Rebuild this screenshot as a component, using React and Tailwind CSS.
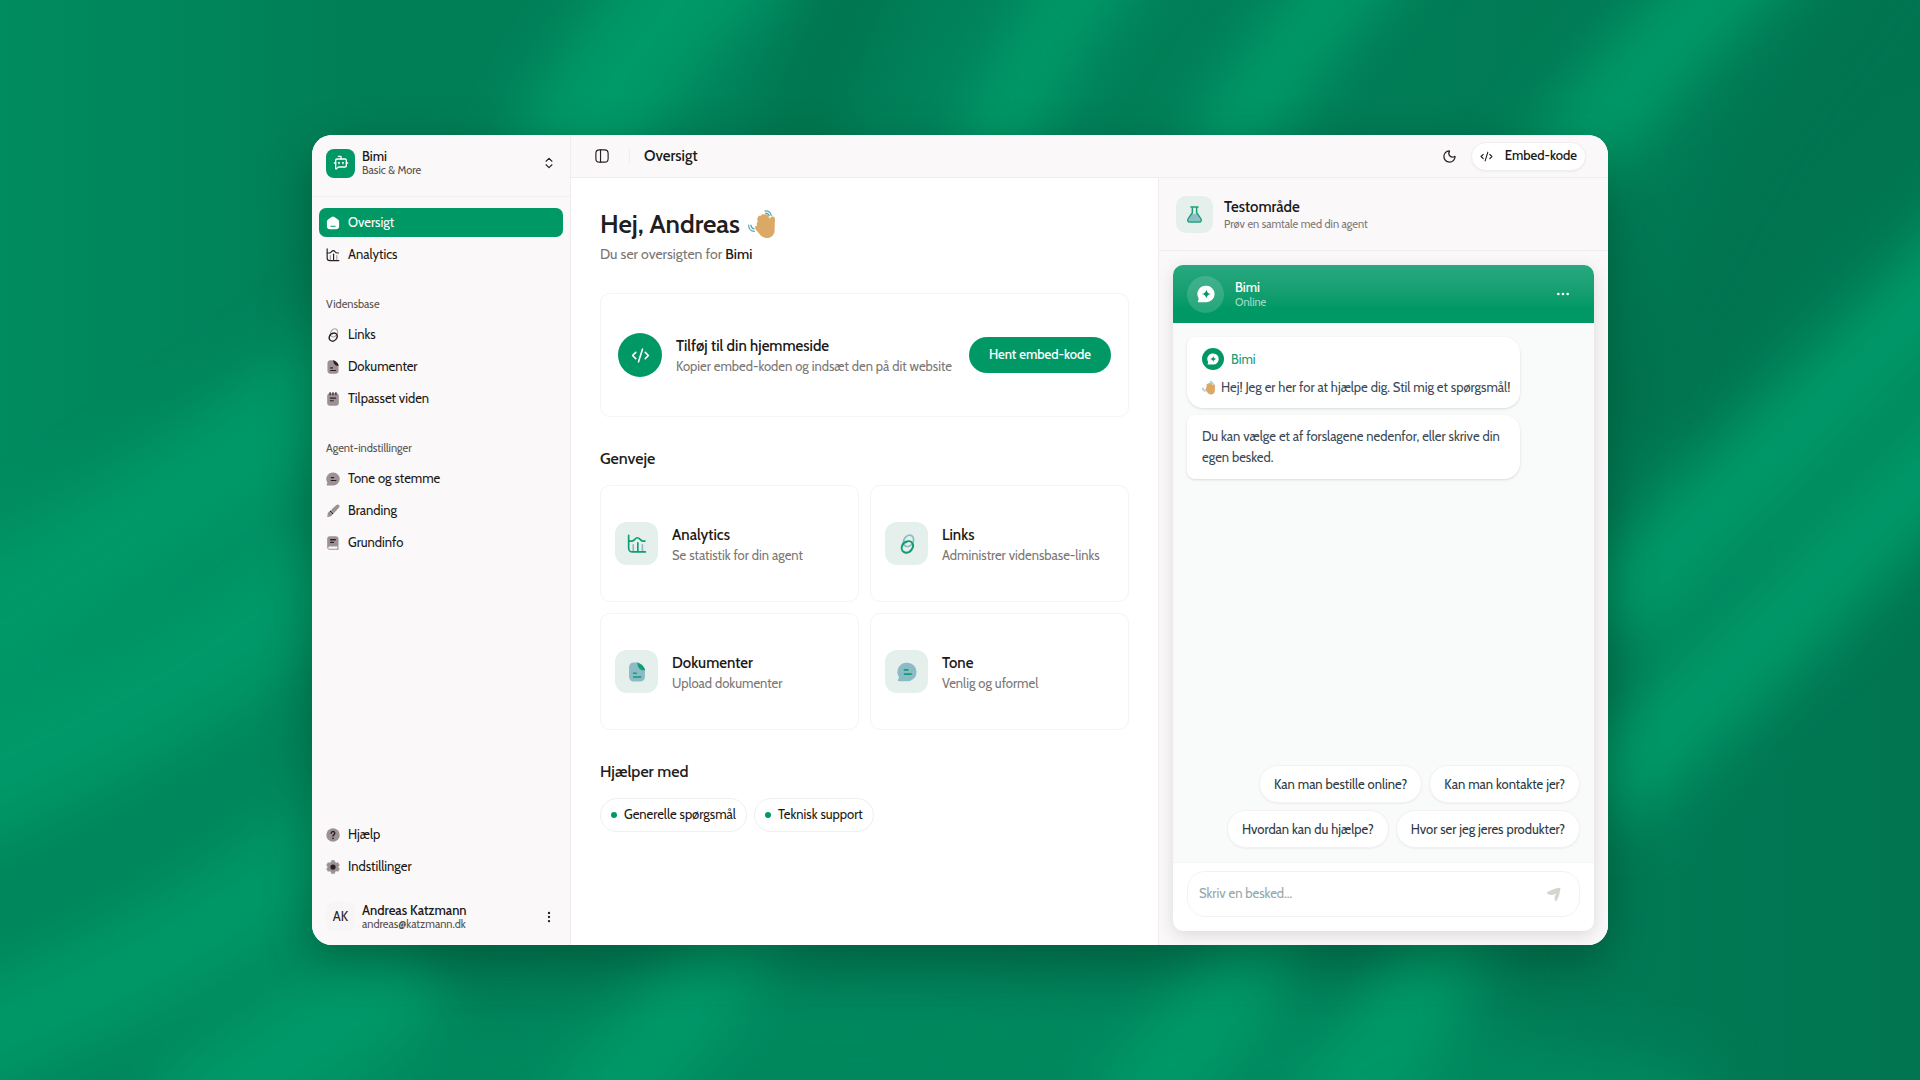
import React, { useState } from 'react'
import {
  BotMessageSquare,
  ChevronsUpDown,
  CodeXml,
  Ellipsis,
  EllipsisVertical,
  Moon,
} from 'lucide-react'

// ---------------------------------------------------------------------------
// Icons: two-tone set, the soft layer is a muted fill under currentColor lines
// ---------------------------------------------------------------------------
function Svg({ size = 14, className = '', children }) {
  return (
    <svg
      width={size}
      height={size}
      viewBox="0 0 24 24"
      fill="none"
      className={`shrink-0 ${className}`}
      aria-hidden="true"
    >
      {children}
    </svg>
  )
}

const line = {
  stroke: 'currentColor',
  strokeWidth: 2,
  strokeLinecap: 'round',
  strokeLinejoin: 'round',
}

function HomeIcon(props) {
  return (
    <Svg {...props}>
      <path
        d="M9.6 1.6 3.5 5.8A5 5 0 0 0 1.5 9.8V17a5.5 5.5 0 0 0 5.5 5.5h10a5.5 5.5 0 0 0 5.5-5.5V9.8a5 5 0 0 0-2-4l-6.100-4.200a4.200 4.200 0 0 0-4.800 0Z"
        fill="currentColor"
      />
      <path d="M8.5 17.5h7" stroke="#009966" strokeWidth="2" strokeLinecap="round" />
    </Svg>
  )
}

function ChartIcon({ soft = '#a8a0a0', ...props }) {
  return (
    <Svg {...props}>
      <path d="M7.5 13v7M18.5 13v7" {...line} stroke={soft} />
      <path d="M2 1.5V17a4.500 4.500 0 0 0 4.500 4.500H22" {...line} />
      <path d="M13 10.5V21" {...line} />
      <path d="M2 8.5h4c3 0 3.500-4 6.500-4S16 8.500 19 8.500h2.500" {...line} />
    </Svg>
  )
}

function LinkIcon({ soft = '#a8a0a0', ...props }) {
  return (
    <Svg {...props}>
      <ellipse cx="13.800" cy="8.300" rx="5.600" ry="7.300" transform="rotate(32 13.800 8.300)" {...line} stroke={soft} />
      <path
        d="M10.500 9.800c2.700-1.700 6.200-1.300 7.800 1 1.700 2.500 1 6-1.300 8.700-2.400 2.800-6.300 3.800-9 2-2.900-2-3-6-1-9.200"
        {...line}
        strokeWidth="2.400"
      />
      <path d="M7 12.300c1.200-2 2.300-2.600 4-3" {...line} strokeWidth="2.400" />
    </Svg>
  )
}

function DocIcon({ soft = '#9c9294', ...props }) {
  return (
    <Svg {...props}>
      <path d="M8 .5h5.500L21.500 9v9a5.500 5.500 0 0 1-5.500 5.500H8A5.500 5.500 0 0 1 2.500 18V6A5.500 5.500 0 0 1 8 .5Z" fill={soft} />
      <path d="M12.500.5c5 1.500 8 4.500 9.500 9.500-6 .5-9.500-3-9.500-9.500Z" fill="currentColor" />
      <path d="M8 13.500h3M8 18h8.500" {...line} />
    </Svg>
  )
}

function NoteIcon(props) {
  return (
    <Svg {...props}>
      <rect x="2" y="2" width="20" height="21.500" rx="5" fill="#9c9294" />
      <path d="M7 1v3.500M12 1v3.500M17 1v3.500M7.500 10.500h9M7.500 15h5" {...line} />
    </Svg>
  )
}

function ChatIcon({ soft = '#9c9294', ...props }) {
  return (
    <Svg {...props}>
      <path
        d="M12.500 1a11 11 0 1 1 0 22H2a1 1 0 0 1-.8-1.600c1-1.300 1.300-2.400.8-3.900A11 11 0 0 1 12.500 1Z"
        fill={soft}
      />
      <path d="M9 9.500h4M9 14.500h8" {...line} />
    </Svg>
  )
}

function BrushIcon(props) {
  return (
    <Svg {...props}>
      <path d="M22.200 1.800c1.400 1.400 1.200 3-.1 4.500l-8.600 9.400-5.200-5.200 9.400-8.600c1.500-1.300 3.100-1.500 4.500-.1Z" fill="#9c9294" />
      <path d="m7.800 11 5.200 5.200-2 1.800L6 13l1.800-2Z" fill="currentColor" />
      <path d="M5.500 13.500c3.500 0 5.200 2 5 4.500-.3 3-3.500 4.500-9 4.300 1.800-2 1-3.300 1.300-5.300.3-1.900 1.200-3.200 2.700-3.500Z" fill="#9c9294" />
    </Svg>
  )
}

function BookIcon(props) {
  return (
    <Svg {...props}>
      <path d="M6.500.5h10A5 5 0 0 1 21.500 5.500V18H6a2 2 0 0 0 0 4h15.500v1.500H6.500A4.500 4.500 0 0 1 2 19V5A4.500 4.500 0 0 1 6.500.5Z" fill="#9c9294" />
      <path d="M20.300 18v4.500" stroke="#9c9294" strokeWidth="2" />
      <path d="M8 6.500h8M8 11h4.500" {...line} strokeWidth="2.400" />
    </Svg>
  )
}

function HelpIcon(props) {
  return (
    <Svg {...props}>
      <circle cx="12" cy="12" r="11.500" fill="#9c9294" />
      <path d="M9 9a3 3 0 1 1 4.700 2.400c-1 .7-1.700 1.200-1.700 2.300" {...line} strokeWidth="2.400" />
      <circle cx="12" cy="17.600" r="1.500" fill="currentColor" />
    </Svg>
  )
}

function GearIcon(props) {
  return (
    <Svg {...props}>
      <path
        d="M9.500 1h5l1 3.200 2 1.100 3.200-.7L23 8.900 21 11.200v1.600l2 2.300-2.300 4.300-3.200-.7-2 1.100-1 3.200h-5l-1-3.200-2-1.100-3.200.7L1 15.100l2-2.300v-1.600L1 8.900l2.300-4.300 3.200.7 2-1.100L9.500 1Z"
        fill="#9c9294"
        stroke="#9c9294"
        strokeLinejoin="round"
      />
      <circle cx="12" cy="12" r="4.500" fill="currentColor" />
    </Svg>
  )
}

function FlaskIcon(props) {
  return (
    <Svg {...props}>
      <path d="M9 11h6l5 8.500c.6 1.400-.2 2-1.500 2h-13c-1.300 0-2.100-.6-1.500-2L9 11Z" fill="#8fbfc4" />
      <path d="M7 1.500h10M9 1.500v8L3 18.200c-1.200 2.300 0 4.300 2.200 4.300h13.600c2.200 0 3.400-2 2.200-4.300L15 9.500v-8" {...line} strokeWidth="2.200" />
    </Svg>
  )
}

function SparkChatIcon({ spark, ...props }) {
  return (
    <Svg {...props}>
      <path
        d="M12.500 1a11 11 0 1 1 0 22H2a1 1 0 0 1-.8-1.600c1-1.300 1.200-2.500.7-4.200A11 11 0 0 1 12.500 1Z"
        fill="currentColor"
      />
      <path d="M12.500 6c.9 4 2 5.100 6 6-4 .9-5.100 2-6 6-.9-4-2-5.100-6-6 4-.9 5.100-2 6-6Z" fill={spark} />
    </Svg>
  )
}

function SendIcon(props) {
  return (
    <Svg {...props}>
      <path
        d="M21.800 1.300c1-.2 1.300.5 1.200 1.400-.5 5.500-2.800 13.500-5.300 18.600-1 1.900-2.600 2-3.300 0-1-2.800-1-6 .6-8.500l1.800-3-3 1.600C11.200 13 8 13 4.500 12 1.500 11 .5 9.300 2.500 8 8 4.500 15.500 2 21.800 1.300Z"
        fill="currentColor"
      />
    </Svg>
  )
}

function PanelIcon(props) {
  return (
    <Svg {...props}>
      <rect x="1.500" y="1.500" width="21" height="21" rx="6" {...line} />
      <path d="M9.500 1.500v21" {...line} />
    </Svg>
  )
}

function WaveHand({ size }) {
  return (
    <svg width={size} height={size} viewBox="0 0 28 28" fill="none" className="shrink-0" aria-hidden="true">
      <path
        d="M9.400 7.600c.3-2 2-2.300 3-1.800.4-1.700 2.400-2.300 3.600-1.400 1.300-.7 2.800 0 3.300 1l1.900 3.300c.3-1.500 1.500-2.700 3-2.400 1.400.3 1.900 1.400 1.800 2.700L25.700 20c-.3 4.500-3.500 7-7.500 7-3.400 0-5.700-1.800-7.300-4l-3.600-4.500c-1.300-2 .2-3.700 1.600-3.500-.9-1.600-.5-3 .7-3.600-.9-1.300-.9-2.800-.2-3.800Z"
        fill="#dba965"
      />
      <path
        d="M16.500.9c3-.2 5.300 1.500 6 4.500M17 3c1.900.1 3 1 3.500 2.600M.6 14.500c0 3.500 2.300 6 5.500 6.200M2.800 14.500c.2 2.200 1.400 3.500 3 3.800"
        stroke="#5ba7b8"
        strokeWidth="1.200"
        strokeLinecap="round"
      />
    </svg>
  )
}

// ---------------------------------------------------------------------------
// Backdrop: soft diagonal folds of green
// ---------------------------------------------------------------------------
function Backdrop() {
  return (
    <svg
      className="absolute inset-0 w-full h-full"
      viewBox="0 0 1920 1080"
      preserveAspectRatio="xMidYMid slice"
      aria-hidden="true"
    >
      <defs>
        <filter id="soft" x="-400" y="-400" width="2800" height="1900" filterUnits="userSpaceOnUse">
          <feGaussianBlur stdDeviation="28" />
        </filter>
        <linearGradient id="base" x1="0" y1="0" x2="1" y2="0">
          <stop offset="0" stopColor="#008c5f" />
          <stop offset="0.2" stopColor="#007e56" />
          <stop offset="0.45" stopColor="#00825a" />
          <stop offset="0.85" stopColor="#007a54" />
          <stop offset="1" stopColor="#007550" />
        </linearGradient>
      </defs>
      <rect width="1920" height="1080" fill="url(#base)" />
      <g filter="url(#soft)" fill="none">
        <path d="M-80 760 Q160 640 360 460 L360 1160 L-80 1160 Z" fill="#00875c" />
        <path d="M300 1120 Q800 980 1700 1120" stroke="#00885d" strokeWidth="110" />
        <path d="M880 -80 L780 180" stroke="#007650" strokeWidth="90" />
        <path d="M1960 -60 L1800 160 L1640 440" stroke="#007450" strokeWidth="120" />
        <g stroke="#009968">
          <path d="M760 -80 Q640 20 560 180" strokeWidth="125" />
          <path d="M1140 -80 Q1040 20 980 180" strokeWidth="80" />
          <path d="M1400 -80 Q1270 60 1210 180" strokeWidth="80" />
          <path d="M1790 -80 Q1640 60 1540 200" strokeWidth="90" />
          <path d="M2020 200 Q1780 460 1600 620" strokeWidth="95" />
          <path d="M2020 370 Q1780 630 1590 800" strokeWidth="95" />
          <path d="M460 290 Q200 500 -80 660" strokeWidth="120" />
          <path d="M330 560 Q180 690 -80 800" strokeWidth="120" />
          <path d="M380 800 Q200 960 -80 1060" strokeWidth="90" />
          <path d="M420 960 Q300 1050 180 1130" strokeWidth="110" />
          <path d="M770 880 Q700 1000 580 1130" strokeWidth="90" />
          <path d="M1280 900 Q1230 1000 1120 1130" strokeWidth="90" />
          <path d="M1460 900 Q1420 1010 1320 1130" strokeWidth="95" />
        </g>
      </g>
    </svg>
  )
}

// ---------------------------------------------------------------------------
// Sidebar
// ---------------------------------------------------------------------------
const NAV_GROUPS = [
  {
    items: [
      { name: 'Oversigt', icon: HomeIcon },
      { name: 'Analytics', icon: ChartIcon },
    ],
  },
  {
    label: 'Vidensbase',
    items: [
      { name: 'Links', icon: LinkIcon },
      { name: 'Dokumenter', icon: DocIcon },
      { name: 'Tilpasset viden', icon: NoteIcon },
    ],
  },
  {
    label: 'Agent-indstillinger',
    items: [
      { name: 'Tone og stemme', icon: ChatIcon },
      { name: 'Branding', icon: BrushIcon },
      { name: 'Grundinfo', icon: BookIcon },
    ],
  },
]

const FOOTER_ITEMS = [
  { name: 'Hjælp', icon: HelpIcon },
  { name: 'Indstillinger', icon: GearIcon },
]

function NavItem({ name, icon: Icon, active }) {
  return (
    <a
      href="#"
      aria-current={active ? 'page' : undefined}
      className={`flex items-center gap-2 h-[29px] px-[7px] rounded-[7px] text-[13px] ${
        active ? 'bg-[#009966] text-white' : 'text-[#1c1917]'
      }`}
    >
      <Icon size={14} className={active ? 'text-white' : 'text-[#2b2020]'} />
      {name}
    </a>
  )
}

function Sidebar() {
  return (
    <aside className="flex flex-col w-[259px] shrink-0 border-r border-[#efedee] bg-[#faf8f9]">
      <button type="button" className="flex items-center gap-[7px] h-[62px] px-[14px] pb-[5px] border-b border-[#efedee] text-left">
        <span className="flex items-center justify-center size-[29px] rounded-lg bg-[#009966] text-white">
          <BotMessageSquare size={16} />
        </span>
        <span className="flex-1 leading-[14px]">
          <span className="block text-[13px] font-medium text-[#1c1917]">Bimi</span>
          <span className="block text-[11px] text-[#57504d]">Basic &amp; More</span>
        </span>
        <ChevronsUpDown size={14} className="text-[#2b2020]" />
      </button>

      <nav className="flex flex-col flex-1 px-[7px] pt-[11px]">
        {NAV_GROUPS.map((group, i) => (
          <div key={i} className="mb-5">
            {group.label && (
              <div className="flex items-center h-[31px] px-[7px] text-[11px] text-[#57534e]">
                {group.label}
              </div>
            )}
            <div className="space-y-[3px]">
              {group.items.map((item) => (
                <NavItem key={item.name} {...item} active={item.name === 'Oversigt'} />
              ))}
            </div>
          </div>
        ))}
        <div className="mt-auto space-y-[3px]">
          {FOOTER_ITEMS.map((item) => (
            <NavItem key={item.name} {...item} />
          ))}
        </div>
      </nav>

      <button type="button" className="flex items-center gap-[7px] h-[64px] px-[14px] pt-[7px] text-left">
        <span className="flex items-center justify-center size-[29px] rounded-lg bg-[#f7f5f5] text-[13px] text-[#292524]">
          AK
        </span>
        <span className="flex-1 leading-[14px]">
          <span className="block text-[13px] font-medium text-[#1c1917]">Andreas Katzmann</span>
          <span className="block text-[11px] text-[#57504d]">andreas@katzmann.dk</span>
        </span>
        <EllipsisVertical size={14} className="text-[#2b2020]" />
      </button>
    </aside>
  )
}

// ---------------------------------------------------------------------------
// Overview
// ---------------------------------------------------------------------------
const SHORTCUTS = [
  { title: 'Analytics', text: 'Se statistik for din agent', icon: ChartIcon },
  { title: 'Links', text: 'Administrer vidensbase-links', icon: LinkIcon },
  { title: 'Dokumenter', text: 'Upload dokumenter', icon: DocIcon },
  { title: 'Tone', text: 'Venlig og uformel', icon: ChatIcon },
]

const TOPICS = ['Generelle spørgsmål', 'Teknisk support']

function TopBar() {
  return (
    <header className="flex items-center h-[43px] pl-6 pr-[22px] border-b border-[#efedee] bg-[#faf8f9]">
      <button type="button" aria-label="Skjul sidepanel" className="text-[#2b2020]">
        <PanelIcon size={14} />
      </button>
      <span className="w-px h-[14px] ml-5 mr-[14px] bg-[#efedee]" />
      <span className="text-[15px] font-medium text-[#1c1917]">Oversigt</span>
      <div className="flex items-center gap-[14px] ml-auto">
        <button type="button" aria-label="Skift tema" className="text-[#2b2020]">
          <Moon size={15} />
        </button>
        <button
          type="button"
          className="flex items-center gap-3 h-[29px] px-2 rounded-full border border-[#efedee] bg-white text-[13px] font-medium text-[#1c1917] shadow-xs"
        >
          <CodeXml size={13} />
          Embed-kode
        </button>
      </div>
    </header>
  )
}

function Overview() {
  return (
    <main className="flex-1 min-w-0 px-[29px] pt-[30px] bg-white">
      <h1 className="flex items-center gap-2 text-[26px] leading-8 font-semibold text-[#211d20]">
        Hej, Andreas <WaveHand size={29} />
      </h1>
      <p className="mt-1 text-sm leading-5 text-[#7c7775]">
        Du ser oversigten for <span className="font-medium text-[#1c1917]">Bimi</span>
      </p>

      <section className="flex items-center mt-[29px] px-[17px] py-[39px] rounded-[10px] border border-[#f5f4f4]">
        <span className="flex items-center justify-center size-11 mr-[14px] rounded-full bg-[#009966] text-white">
          <CodeXml size={19} />
        </span>
        <div className="flex-1">
          <h2 className="pt-[2px] text-[15px] leading-5 font-medium text-[#1c1917]">Tilføj til din hjemmeside</h2>
          <p className="text-[13px] leading-5 text-[#7c7775]">Kopier embed-koden og indsæt den på dit website</p>
        </div>
        <button type="button" className="h-9 px-5 rounded-full bg-[#009966] text-[13px] font-medium text-white">
          Hent embed-kode
        </button>
      </section>

      <h2 className="mt-[30px] text-base leading-6 font-medium text-[#211d20]">Genveje</h2>
      <div className="grid grid-cols-2 gap-[11px] mt-[14px]">
        {SHORTCUTS.map(({ title, text, icon: Icon }) => (
          <a key={title} href="#" className="flex items-center gap-[14px] px-[14px] py-9 rounded-[10px] border border-[#f5f4f4]">
            <span className="flex items-center justify-center size-[43px] rounded-xl bg-[#e5f0ed] text-[#0f9d71]">
              <Icon size={20} soft="#8bbbc4" />
            </span>
            <span className="pt-[2px] leading-5">
              <span className="block text-[15px] font-medium text-[#1c1917]">{title}</span>
              <span className="block text-[13px] text-[#7c7775]">{text}</span>
            </span>
          </a>
        ))}
      </div>

      <h2 className="mt-[30px] text-base leading-6 font-medium text-[#211d20]">Hjælper med</h2>
      <ul className="flex gap-[7px] mt-[14px]">
        {TOPICS.map((topic) => (
          <li
            key={topic}
            className="flex items-center gap-[7px] h-[34px] px-[10px] rounded-full border border-[#f0eeee] text-[13px] text-[#1c1917]"
          >
            <span className="size-[6px] rounded-full bg-[#009966]" />
            {topic}
          </li>
        ))}
      </ul>
    </main>
  )
}

// ---------------------------------------------------------------------------
// Test area with the chat widget
// ---------------------------------------------------------------------------
const REPLIES = [
  'Kan man bestille online?',
  'Kan man kontakte jer?',
  'Hvordan kan du hjælpe?',
  'Hvor ser jeg jeres produkter?',
]

function ChatWidget() {
  const [message, setMessage] = useState('')

  return (
    <section className="flex flex-col flex-1 m-[14px] rounded-[10px] overflow-hidden bg-white shadow-[0_4px_16px_rgba(41,37,36,0.14)]">
      <header className="flex items-center h-[58px] px-[14px] bg-linear-to-b from-[#28a880] to-[#009966] to-75% text-white">
        <span className="flex items-center justify-center size-[37px] mr-[11px] rounded-full bg-white/15">
          <SparkChatIcon size={18} spark="#009966" />
        </span>
        <span className="flex-1 pt-[2px] leading-[15px]">
          <span className="block text-[13px] font-medium">Bimi</span>
          <span className="block text-[11px] text-[#a8dcca]">Online</span>
        </span>
        <button type="button" aria-label="Flere valg" className="mr-[9px]">
          <Ellipsis size={16} />
        </button>
      </header>

      <div className="flex flex-col flex-1 p-[14px] bg-[#f9fafa] text-[13px] leading-[21px] text-[#3c4a56]">
        <div className="w-[333px] pl-[15px] pr-2 pt-[11px] pb-[10px] rounded-2xl rounded-tl-lg bg-white shadow-sm">
          <div className="flex items-center gap-[7px] text-[#1d9c74]">
            <span className="flex items-center justify-center size-[22px] rounded-full bg-[#009966] text-white">
              <SparkChatIcon size={12} spark="#009966" />
            </span>
            Bimi
          </div>
          <p className="flex items-center gap-[5px] mt-[7px]">
            <WaveHand size={14} />
            Hej! Jeg er her for at hjælpe dig. Stil mig et spørgsmål!
          </p>
        </div>
        <p className="w-[333px] mt-[7px] px-[15px] py-[11px] rounded-2xl rounded-l-lg bg-white shadow-sm">
          Du kan vælge et af forslagene nedenfor, eller skrive din egen besked.
        </p>
        <div className="flex flex-wrap justify-end gap-[7px] mt-auto">
          {REPLIES.map((reply) => (
            <button
              key={reply}
              type="button"
              className="h-[38px] px-[14px] rounded-full border border-[#f3f1f1] bg-white text-[#2f3a44] shadow-xs"
            >
              {reply}
            </button>
          ))}
        </div>
      </div>

      <form className="px-[14px] pt-2 pb-[14px] border-t border-[#f5f4f4]" onSubmit={(e) => e.preventDefault()}>
        <div className="flex items-center h-[46px] pl-[11px] pr-[18px] rounded-[18px] border border-[#f3f2f2]">
          <input
            type="text"
            aria-label="Besked"
            placeholder="Skriv en besked..."
            value={message}
            onChange={(e) => setMessage(e.target.value)}
            className="flex-1 min-w-0 text-[13px] text-[#3c4a56] outline-none placeholder:text-[#93a8ac]"
          />
          <button type="submit" aria-label="Send" className="text-[#d5d5d0]">
            <SendIcon size={15} />
          </button>
        </div>
      </form>
    </section>
  )
}

function TestArea() {
  return (
    <aside className="flex flex-col w-[450px] shrink-0 border-l border-[#efedee] bg-[#faf8f9]">
      <header className="flex items-center h-[73px] gap-[11px] px-[17px] border-b border-[#efedee]">
        <span className="flex items-center justify-center size-[37px] rounded-[10px] bg-[#e5f0ed] text-[#1a9f77]">
          <FlaskIcon size={17} />
        </span>
        <div className="pt-[2px]">
          <h2 className="text-[15px] leading-[18px] font-medium text-[#1c1917]">Testområde</h2>
          <p className="text-[11px] leading-4 text-[#7c7775]">Prøv en samtale med din agent</p>
        </div>
      </header>
      <ChatWidget />
    </aside>
  )
}

export default function App() {
  return (
    <div className="relative flex items-center justify-center h-screen overflow-hidden font-['Cabin','Lato',sans-serif]">
      <Backdrop />
      <div className="relative flex w-[67.5%] h-[75vh] rounded-[20px] overflow-hidden bg-white shadow-[0_18px_50px_rgba(0,50,30,0.45)]">
        <Sidebar />
        <div className="flex flex-col flex-1 min-w-0">
          <TopBar />
          <div className="flex flex-1 min-h-0">
            <Overview />
            <TestArea />
          </div>
        </div>
      </div>
    </div>
  )
}
